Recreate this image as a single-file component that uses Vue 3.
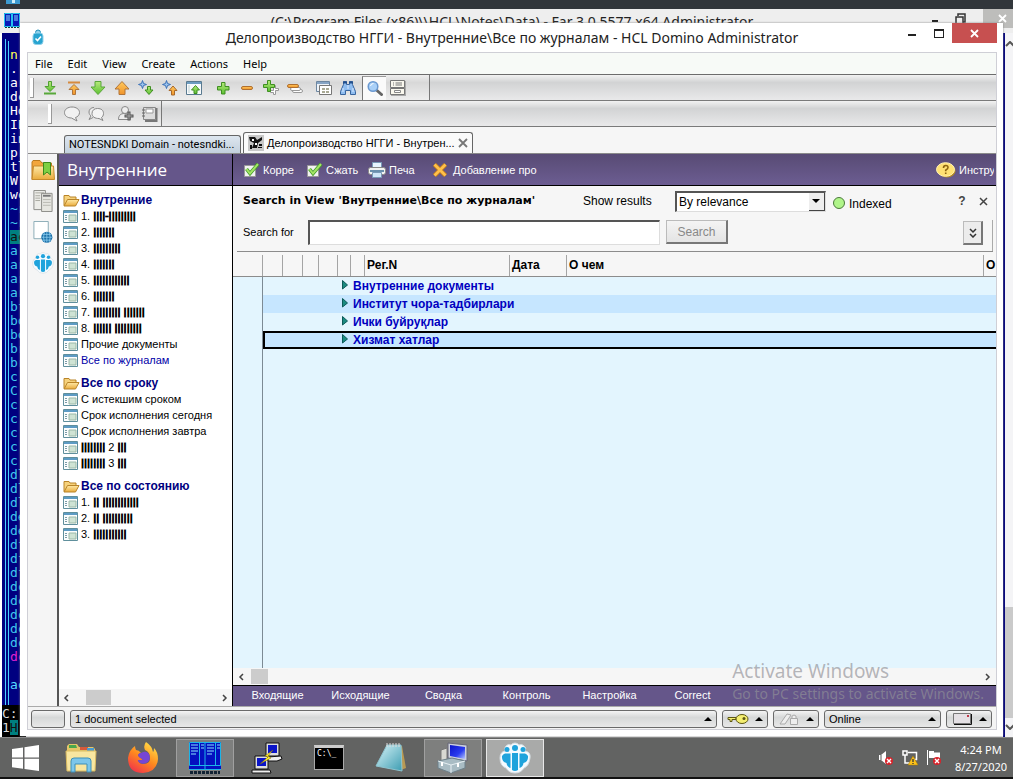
<script setup>
import { ref } from 'vue'

const consoleLines = [
  ['n', 'y'], ['.', 'w'], ['ar', 'w'], ['dc', 'w'], ['Ho', 'w'], ['IE', 'w'], ['in', 'w'], ['pr', 'w'], ['tl', 'w'],
  ['W', 'w'], ['wc', 'w'], ['~r', 'c'], ['~r', 'c'], ['ac', 'hl'], ['a', 'c'], ['ar', 'c'], ['ar', 'c'], ['ar', 'c'],
  ['bf', 'c'], ['bo', 'c'], ['bo', 'c'], ['br', 'c'], ['br', 'c'], ['c.', 'c'], ['C.', 'c'], ['c.', 'c'], ['c.', 'c'],
  ['c.', 'c'], ['c.', 'c'], ['c.', 'c'], ['dl', 'c'], ['dl', 'c'], ['dl', 'c'], ['de', 'c'], ['de', 'c'], ['df', 'c'],
  ['df', 'c'], ['df', 'c'], ['dc', 'c'], ['dc', 'c'], ['dc', 'c'], ['dc', 'c'], ['dc', 'c'], ['dc', 'm'],
]

const menus = ['File', 'Edit', 'View', 'Create', 'Actions', 'Help']

const tools = [
  [['down-bar', 'Last'], ['up-bar', 'First'], ['down', 'Next'], ['up', 'Previous'], ['next-unread', 'Next unread'], ['prev-unread', 'Previous unread'], ['parent', 'Open parent']],
  [['plus', 'Expand'], ['minus', 'Collapse'], ['plus-all', 'Expand all'], ['minus-all', 'Collapse all']],
  [['grid', 'Calendar'], ['binoculars', 'Find']],
]

const bars = (n) => '|'.repeat(n)
const groups = [
  {
    title: 'Внутренние',
    items: [
      ['1. ', bars(4) + '-' + bars(9)], ['2. ', bars(7)], ['3. ', bars(9)], ['4. ', bars(7)], ['5. ', bars(12)],
      ['6. ', bars(7)], ['7. ', bars(9), ' ', bars(7)], ['8. ', bars(6), ' ', bars(9)], ['Прочие документы'], ['Все по журналам'],
    ],
  },
  {
    title: 'Все по сроку',
    items: [['С истекшим сроком'], ['Срок исполнения сегодня'], ['Срок исполнения завтра'], ['', bars(8), ' 2 ', bars(3)], ['', bars(8), ' 3 ', bars(3)]],
  },
  {
    title: 'Все по состоянию',
    items: [['1. ', bars(2), ' ', bars(12)], ['2. ', bars(2), ' ', bars(10)], ['3. ', bars(11)]],
  },
]

const rows = ['Внутренние документы', 'Институт чора-тадбирлари', 'Ички буйруқлар', 'Хизмат хатлар']
const sections = ['Входящие', 'Исходящие', 'Сводка', 'Контроль', 'Настройка', 'Correct']
const apps = [
  ['explorer', 'File Explorer', ''], ['firefox', 'Firefox', ''], ['far', 'Far Manager', 'open'], ['putty', 'PuTTY', ''],
  ['cmd', 'Command Prompt', ''], ['notepad', 'Notepad', ''], ['server', 'Server', 'open'], ['domino', 'Domino Administrator', 'open current'],
]

const query = ref('')
const order = ref('By relevance')
const selected = ref(3)
</script>

<template>
  <svg class="defs" aria-hidden="true">
    <defs>
      <linearGradient id="g-green" x1="0" y1="0" x2="0" y2="1"><stop offset="0" stop-color="#b6ea7a" /><stop offset="1" stop-color="#5cc032" /></linearGradient>
      <linearGradient id="g-orange" x1="0" y1="0" x2="0" y2="1"><stop offset="0" stop-color="#ffc95c" /><stop offset="1" stop-color="#f0942c" /></linearGradient>
      <linearGradient id="g-folder" x1="0" y1="0" x2="0" y2="1"><stop offset="0" stop-color="#ffe9a6" /><stop offset="1" stop-color="#e9ab3c" /></linearGradient>
      <linearGradient id="g-fox" x1="0.8" y1="0" x2="0.2" y2="1"><stop offset="0" stop-color="#ffe14a" /><stop offset="0.5" stop-color="#ff8a1e" /><stop offset="1" stop-color="#f0304c" /></linearGradient>
      <linearGradient id="g-screen" x1="0" y1="0" x2="1" y2="1"><stop offset="0" stop-color="#0a12c8" /><stop offset="0.6" stop-color="#2a3cf0" /><stop offset="1" stop-color="#b8c8ff" /></linearGradient>
      <linearGradient id="g-note" x1="0" y1="0" x2="1" y2="1"><stop offset="0" stop-color="#d9f4f8" /><stop offset="1" stop-color="#3d9db2" /></linearGradient>

      <symbol id="down-bar" viewBox="0 0 16 16"><path d="M6.500 1.500h3v5h3.500L8 11.500 3 6.500h3.500z" fill="url(#g-green)" stroke="#4f9f32" /><path d="M2 13.500h12" stroke="#58a83a" stroke-width="2" /></symbol>
      <symbol id="up-bar" viewBox="0 0 16 16"><path d="M6.500 14.500h3v-5h3.500L8 4.500 3 9.500h3.500z" fill="url(#g-orange)" stroke="#b0753a" /><path d="M2 2.500h12" stroke="#d68a3e" stroke-width="2" /></symbol>
      <symbol id="down" viewBox="0 0 16 16"><path d="M5 1.500h6v5.500h4L8 14.500 1 7h4z" fill="url(#g-green)" stroke="#5ba63c" /></symbol>
      <symbol id="up" viewBox="0 0 16 16"><path d="M5 14.500h6V9h4L8 1.500 1 9h4z" fill="url(#g-orange)" stroke="#b0753a" /></symbol>
      <symbol id="next-unread" viewBox="0 0 16 16"><path d="M4.500 .5l1 3 3 1-3 1-1 3-1-3-3-1 3-1z" fill="#9cc4ee" stroke="#3c72b8" /><path d="M9.500 6.500h3v3.500h2.500l-4 4.500-4-4.500h2.500z" fill="url(#g-green)" stroke="#3f8f22" /></symbol>
      <symbol id="prev-unread" viewBox="0 0 16 16"><path d="M4.500 .5l1 3 3 1-3 1-1 3-1-3-3-1 3-1z" fill="#9cc4ee" stroke="#3c72b8" /><path d="M9.500 15h3v-4.500h2.500l-4-4.500-4 4.500h2.500z" fill="url(#g-orange)" stroke="#a8692a" /></symbol>
      <symbol id="parent" viewBox="0 0 16 16"><path d="M.5 1.500h15v13H.5z" fill="#f7fafc" stroke="#5a7a90" /><path d="M1 3h14" stroke="#6d9cc0" stroke-width="2" /><path d="M3 5.500v8" stroke="#8aa" stroke-dasharray="1 1" /><path d="M8 13.500h3v-3.500h2.500L9.500 5.500 5.500 10H8z" fill="url(#g-green)" stroke="#3f8f22" /></symbol>
      <symbol id="plus" viewBox="0 0 16 16"><path d="M6.500 2.500h3.500v4h4V10h-4v4H6.500v-4h-4V6.500h4z" fill="url(#g-green)" stroke="#3f8f22" /></symbol>
      <symbol id="minus" viewBox="0 0 16 16"><rect x="2.500" y="6.500" width="11" height="3" rx="1.500" fill="url(#g-orange)" stroke="#b06f2e" /></symbol>
      <symbol id="plus-all" viewBox="0 0 16 16"><path d="M10.500 5.500h2v3h3v2h-3v4h-2v-2h-3v-2h3z" fill="#fff" stroke="#999" /><path d="M4.500 .5h3v4h4v3h-4v4h-3v-4h-4v-3h4z" fill="url(#g-green)" stroke="#3f8f22" /></symbol>
      <symbol id="minus-all" viewBox="0 0 16 16"><rect x="5.500" y="9.500" width="10" height="3" rx="1.500" fill="#fff" stroke="#999" /><rect x="3.500" y="7.500" width="10" height="3" rx="1.500" fill="#fff" stroke="#999" /><rect x=".5" y="4.500" width="11" height="3" rx="1.500" fill="url(#g-orange)" stroke="#b06f2e" /></symbol>
      <symbol id="grid" viewBox="0 0 16 16"><path d="M.5 1.500h13v10H.5z" fill="#eef3f8" stroke="#6d86a0" /><path d="M1 3h12" stroke="#86a4c4" stroke-width="2" /><path d="M3.500 5.500h12v9h-12z" fill="#fff" stroke="#777" /><path d="M6 8h3v2H6zM10 8h3v2h-3zM6 11h3v2H6zM10 11h3v2h-3z" fill="#a9a994" /></symbol>
      <symbol id="binoculars" viewBox="0 0 16 16"><path d="M3.500 1.500h3v3h3v-3h3v3l3 7v3h-5v-4h-5v4h-5v-3l3-7z" fill="#8fbdf0" stroke="#3a669f" /><path d="M3 8v4M13 8v4M8 5v4" stroke="#dbeaff" /><path d="M3 2.500h4M9 2.500h4" stroke="#234f8c" stroke-width="2" /></symbol>
      <symbol id="magnifier" viewBox="0 0 16 16"><path d="M10 10.500l4.500 4" stroke="#666" stroke-width="3" stroke-linecap="round" /><circle cx="6" cy="6.500" r="4.800" fill="#a9d0f8" stroke="#6a98d0" stroke-width="1.500" /><path d="M3.500 6a3 3 0 0 1 3-2.500" stroke="#fff" fill="none" /></symbol>
      <symbol id="form" viewBox="0 0 16 16"><path d="M1 1h15v15H1z" fill="#aaa" /><path d="M.5.5h14v7H.5zM.5 8.500h14v6H.5z" fill="#faf8ee" stroke="#777" /><path d="M3 3h1M5.500 3H12M3 5h1M5.500 5H12" stroke="#777" /><path d="M4.500 10.500h6v2h-6z" fill="#fff" stroke="#888" /></symbol>
      <symbol id="chat" viewBox="0 0 16 16"><path d="M8 1c4 0 7.500 2.200 7.500 5.500 0 2.500-2 4.500-4 5L13 15 7.500 12C3.500 12 .5 9.800.5 6.500S4 1 8 1z" fill="#f1f1f1" stroke="#888" /></symbol>
      <symbol id="chats" viewBox="0 0 16 16"><path d="M6 1.500c-3 0-5 2-5 4.500 0 2 1 3 2 4l-2 3.500 4-2" fill="#eee" stroke="#888" /><path d="M9.500 2.500c4 0 6 2 6 5 0 2-1 3.500-2 4l1.500 3-4-2C7 12.500 4 11 4 7.500s2.500-5 5.500-5z" fill="#f4f4f4" stroke="#888" /></symbol>
      <symbol id="add-person" viewBox="0 0 16 16"><circle cx="7" cy="4" r="3.500" fill="#eee" stroke="#888" /><path d="M.5 13.500c0-4 2-6 6-6s6 2 6 6z" fill="#eee" stroke="#888" /><path d="M11 5.500v9M6.500 10h9" stroke="#555" stroke-width="3" /><path d="M11 6.500v7M7.500 10h7" stroke="#aaa" /></symbol>
      <symbol id="book" viewBox="0 0 16 16"><path d="M1.500 1.500h12v12h-12z" fill="#ddd" stroke="#888" /><path d="M4 3h7v4H4z" fill="#fff" stroke="#999" /><path d="M0 4h3M0 7h3M0 10h3" stroke="#666" /><path d="M14.500 2v13H3" fill="none" stroke="#777" stroke-width="2" /></symbol>

      <symbol id="view" viewBox="0 0 15 13"><path d="M.5.500h14v12H.5z" fill="#fbfdfd" stroke="#5f8f9c" /><path d="M1 2h13" stroke="#5d9bc4" stroke-width="2" /><path d="M2 5.500h2M2 7.500h2M2 9.500h2" stroke="#7a9aa6" /><path d="M6 5h7v6H6z" fill="#cfe3d4" stroke="#9ab8a8" /></symbol>
      <symbol id="folder" viewBox="0 0 16 13"><path d="M.5 11.500v-10h5l1 1.500h6v3" fill="#f6d27c" stroke="#b98428" /><path d="M.5 12L4 5.500h11.500L12 12z" fill="url(#g-folder)" stroke="#b98428" /></symbol>
      <symbol id="domino" viewBox="0 0 32 32"><path d="M7 4a4 4 0 0 1 5-1 5 5 0 0 1 8 0 4 4 0 0 1 5 1q3 2 1 5 6 1 5 7-1 8-6 10-3 5-9 5t-9-5Q1 24 1 16q0-6 5-7-1-3 1-5z" fill="#f5fbff" stroke="#d6dde2" /><g fill="#1fa3dc"><circle cx="16" cy="6" r="3" /><circle cx="8" cy="7.500" r="2.500" /><circle cx="24" cy="7.500" r="2.500" /><path d="M13 11h6v17q-3 2-6 0zM6 11.500h5.500V26Q8 25 7.500 21q-5-1-4.500-7 1-2 3-2.500zM26 11.500h-5.500V26q3.500-1 4-5 5-1 4.500-7-1-2-3-2.500z" /></g></symbol>
      <symbol id="check" viewBox="0 0 16 16"><path d="M.5 3.500h11v11H.5z" fill="#f2f2f2" stroke="#999" /><path d="M2.500 7l3.500 4.500L14 2" fill="none" stroke="#3f9a26" stroke-width="3.500" /><path d="M2.500 7l3.500 4.500L14 2" fill="none" stroke="#a4e566" stroke-width="2" /></symbol>
      <symbol id="print" viewBox="0 0 18 16"><path d="M4.500.5h9v6h-9z" fill="#e8f4ff" stroke="#7a9ab8" /><rect x=".5" y="5.500" width="17" height="7" rx="2" fill="#f2f2f2" stroke="#888" /><path d="M2 9h14" stroke="#6a8fae" stroke-width="2" /><path d="M4.500 10.500h9v5h-9z" fill="#cfe6fa" stroke="#7a9ab8" /></symbol>
      <symbol id="cross" viewBox="0 0 16 16"><path d="M2.500 2.500l11 11M13.500 2.500l-11 11" stroke="#c07b1c" stroke-width="4.500" /><path d="M2.500 2.500l11 11M13.500 2.500l-11 11" stroke="#ffc04a" stroke-width="2.800" /></symbol>
      <symbol id="help" viewBox="0 0 20 16"><ellipse cx="11" cy="9" rx="8.500" ry="6.500" fill="#b98e20" /><ellipse cx="9.500" cy="7.500" rx="9" ry="6.800" fill="#ffe173" stroke="#fff2b4" /><path d="M7.500 6q0-2.500 2.300-2.500T12 5.500q0 1.200-2.300 2.700v1M9.700 10.500V12" fill="none" stroke="#8c6410" stroke-width="1.600" /></symbol>
      <symbol id="panels" viewBox="0 0 16 16"><path d="M0 0h16v14H0z" fill="#0818b8" /><path d="M.5.5h7v13h-7zM8.500.5h7v13h-7z" fill="none" stroke="#23c3ee" /><path d="M2 3h4M2 5h4M2 7h4M10 3h4M10 5h4M10 7h4" stroke="#8adfff" /><path d="M1 14.500h14" stroke="#0a3b3b" stroke-dasharray="2 1" /></symbol>
      <symbol id="shield" viewBox="0 0 12 16"><circle cx="6" cy="3.500" r="2.500" fill="#8fd0ea" stroke="#2390b8" /><rect x="1" y="4" width="10" height="11.500" rx="3" fill="#28a4d0" stroke="#8fd0ea" /><path d="M3.500 9.500l2 2 3.500-4" fill="none" stroke="#fff" stroke-width="1.600" /></symbol>

      <symbol id="bookmarks" viewBox="0 0 24 22"><path d="M1 20.500V3l1-1.500h7L11 4h9.500v16.500z" fill="#f2a63c" stroke="#b97a1e" /><path d="M1 20.500L2.500 7h20l1 13.500z" fill="url(#g-folder)" stroke="#c68a2a" /><path d="M12.500 3.500h7V16L16 13l-3.500 3z" fill="#7ed043" stroke="#3d8a1e" /></symbol>
      <symbol id="pages" viewBox="0 0 20 23"><path d="M.5.5h12v20H.5z" fill="#ecece8" stroke="#8c8c86" /><path d="M2 3h9M2 6h5M2 8.500h5M2 11h5" stroke="#a8a8a0" /><path d="M8.500 3.500h11v19h-11z" fill="#e6e6e0" stroke="#8c8c86" /><path d="M10 6h8" stroke="#777" stroke-width="2" /><path d="M10 10h8M10 13h8M10 16h8" stroke="#b8b8b0" /></symbol>
      <symbol id="web" viewBox="0 0 20 23"><path d="M.5.5h15v18H.5z" fill="#fff" stroke="#88aab4" /><circle cx="14" cy="17" r="5.800" fill="#1b6fa8" /><path d="M8.500 17h11M9.500 14h9M9.500 20h9M14 11.500v11M11.500 12q-2 5 0 10M16.500 12q2 5 0 10" stroke="#8fd0f0" fill="none" stroke-width=".8" /></symbol>

      <symbol id="explorer" viewBox="0 0 32 32"><path d="M2 26V4l2-2h8l2 3h14l2 2v19z" fill="#e5c667" /><path d="M4 3h7l1 3H4z" fill="#49a84c" /><path d="M15 5h8v3h-8z" fill="#d65a3a" /><path d="M22 6h7v3h-7z" fill="#4a9ad0" /><path d="M1 9h30l-1 20H2z" fill="#f8e6a0" stroke="#d9bb62" /><path d="M9 16q-3 0-3 3v11h4v-8h12v8h4V19q0-3-3-3z" fill="#7cc6ea" stroke="#3d8fb8" /></symbol>
      <symbol id="firefox" viewBox="0 0 32 32"><path d="M19 0q-3 4-1 8 5 2 5 8 0 6-7 6-4 0-5-4 3 1 5-1-4-1-5-4 1-2 3-2-2-3-5-3Q8 6 8 4 2 8 1 16q0 15 15 15 14-1 15-14 0-7-4-11 0 3-1 4-1-6-7-10z" fill="url(#g-fox)" /><path d="M14 11q5-3 8 1 2 5-1 8-4 3-8 1-3-2-2-3 3 1 5-1-4-1-5-4 1-2 3-2z" fill="#7646d4" /></symbol>
      <symbol id="far" viewBox="0 0 32 32"><path d="M0 0h32v28H0z" fill="#0410c0" /><path d="M.5.5h31v23H.5zM10.500 0v24M16 0v28M26.500 0v24M0 27.500h32" fill="none" stroke="#1cb4e8" /><path d="M2 3h7M2 6h7M2 9h7M2 12h5M12 3h3M12 6h3M18 3h7M18 6h7M18 9h7M18 12h5M28 3h3M28 6h3" stroke="#8ae4ff" /><path d="M1 30.500h30" stroke="#123" stroke-width="3" stroke-dasharray="3 1" /></symbol>
      <symbol id="putty" viewBox="0 0 32 32"><path d="M15 1h13v13H15zM4 14h13v13H4z" fill="#ddd" stroke="#111" /><path d="M17 3h9v8h-9zM6 16h9v8H6z" fill="#0a14c8" /><path d="M17 15l13-1 1 3-5 2h-9zM1 28h18l1 3H1z" fill="#eee" stroke="#111" /><path d="M22 8l-8 6 3 1-8 7 11-6-3-2z" fill="#ffee2a" stroke="#806800" stroke-width=".5" /></symbol>
      <symbol id="notepad" viewBox="0 0 32 32"><path d="M25 4h2l4 22-5 2z" fill="#b99a54" /><path d="M12 3h14l1 26-26-5z" fill="url(#g-note)" stroke="#8ec4cf" /><path d="M12 1v4M15 1v4M18 1v4M21 1v4M24 1v4" stroke="#ddd" /></symbol>
      <symbol id="server" viewBox="0 0 32 32"><path d="M4 8l6-2v14l-6 1z" fill="#d8d8d2" stroke="#777" /><path d="M11 1l19 2v16l-19-3z" fill="#ccd0dd" stroke="#667" /><path d="M13 3l15 2v12l-15-3z" fill="url(#g-screen)" /><path d="M1 19l14-3 13 3v7l-14 5-13-5z" fill="#a9bcc4" stroke="#6d808a" /><path d="M1 19l13 4 14-4M14 23v8" fill="none" stroke="#e6eef2" /><path d="M5 20v4M21 21v4" stroke="#fff" stroke-width="2" /></symbol>

      <symbol id="bad" viewBox="0 0 8 8"><circle cx="4" cy="4" r="4" fill="#d8232a" /><path d="M2 2l4 4M6 2L2 6" stroke="#fff" stroke-width="1.400" /></symbol>
    </defs>
  </svg>

  <div class="desktop">
    <div class="top-strip"><svg class="strip-icon" viewBox="0 0 14 4"><path d="M0 0h14v4H0z" fill="#3d9ad0" /><path d="M3 0h3v3h3V0" fill="#cfeefa" /></svg></div>

    <div class="workspace">
      <section class="far-window">
        <header class="far-title">
          <svg class="far-icon"><use href="#panels" /></svg>
          <span class="far-name">(C:\Program Files (x86)\\HCL\Notes\Data) - Far 3.0.5577 x64 Administrator</span>
          <span class="far-controls"><i class="dash"></i><svg class="restore" viewBox="0 0 11 12"><path d="M3 3V1h7v8H8M1 4h7v7H1z" fill="none" stroke="#333" stroke-width="1.500" /></svg><b><svg viewBox="0 0 9 9"><path d="M1 1l7 7M8 1L1 8" stroke="#fff" stroke-width="1.800" /></svg></b></span>
        </header>
        <div class="far-body">
          <div class="console">
            <div class="panel">
              <p v-for="(l, i) in consoleLines" :key="i" :class="l[1]">{{ l[0] }}</p>
              <p class="w current-file">ac</p>
            </div>
            <div class="prompt"><p>C:</p><p>1<span>H</span></p></div>
          </div>
          <div class="far-scroll">
            <svg viewBox="0 0 8 6"><path d="M1 5l4-4 4 4" /></svg><i></i><svg viewBox="0 0 8 6"><path d="M1 1l4 4 4-4" /></svg>
          </div>
        </div>
      </section>

      <main class="window">
        <header class="title-bar">
          <svg class="title-icon"><use href="#shield" /></svg>
          <h1>Делопроизводство НГГИ - Внутренние\Все по журналам - HCL Domino Administrator</h1>
          <div class="win-controls">
            <button aria-label="Minimize"><i class="dash"></i></button>
            <button aria-label="Maximize"><i class="box"></i></button>
            <button class="close" aria-label="Close"><svg viewBox="0 0 9 9"><path d="M1 1l7 7M8 1L1 8" stroke="#fff" stroke-width="1.800" /></svg></button>
          </div>
        </header>

        <div class="client">
          <nav class="menu"><button v-for="m in menus" :key="m">{{ m }}</button></nav>

          <div class="tool-row">
            <div class="tool-set">
              <i class="grip"></i>
              <div v-for="(set, i) in tools" :key="i" class="tool-group">
                <button v-for="t in set" :key="t[0]" :aria-label="t[1]"><svg><use :href="'#' + t[0]" /></svg></button>
              </div>
              <button class="pressed" aria-label="Search"><svg><use href="#magnifier" /></svg></button>
              <button aria-label="Form"><svg><use href="#form" /></svg></button>
            </div>
          </div>
          <div class="tool-row">
            <div class="tool-set second">
              <i class="grip"></i>
              <div class="tool-group"><button aria-label="Chat"><svg><use href="#chat" /></svg></button><button aria-label="Group chat"><svg><use href="#chats" /></svg></button></div>
              <div class="tool-group"><button aria-label="Add contact"><svg><use href="#add-person" /></svg></button><button aria-label="Address book"><svg><use href="#book" /></svg></button></div>
            </div>
          </div>

          <div class="tabs">
            <button class="tab">NOTESNDKI Domain - notesndki...</button>
            <button class="tab active">
              <svg class="tab-icon" viewBox="0 0 16 16"><path d="M0 0h16v16H0z" fill="#c8c8c8" /><path d="M1 2h6l2 3 5-3v3l-4 3-1 5H4l2-5-4-2zM11 9h3v2h-3zM10 12h4v1h-4zM2 10h2v4H2z" fill="#111" /><path d="M4 4h2v2H4zM7 8h2v2H7z" fill="#fff" /></svg>
              <span>Делопроизводство НГГИ - Внутрен...</span>
              <svg class="tab-close" viewBox="0 0 10 10"><path d="M1 1l8 8M9 1L1 9" stroke="#777" stroke-width="1.800" /></svg>
            </button>
          </div>

          <div class="body">
            <aside class="rail">
              <button aria-label="Bookmarks"><svg class="wide"><use href="#bookmarks" /></svg></button>
              <button aria-label="Pages"><svg><use href="#pages" /></svg></button>
              <button aria-label="Web"><svg><use href="#web" /></svg></button>
              <button aria-label="Domino"><svg class="wide"><use href="#domino" /></svg></button>
            </aside>

            <aside class="sidebar">
              <h2>Внутренние</h2>
              <div class="tree">
                <section v-for="g in groups" :key="g.title">
                  <h3><svg><use href="#folder" /></svg>{{ g.title }}</h3>
                  <a v-for="(it, i) in g.items" :key="i" href="#" :class="{ chosen: it[0] === 'Все по журналам' }">
                    <svg><use href="#view" /></svg><span v-for="(part, k) in it" :key="k" :class="{ bars: k % 2 }">{{ part }}</span>
                  </a>
                </section>
              </div>
              <div class="hscroll"><svg viewBox="0 0 6 8"><path d="M5 1L2 4l3 3" /></svg><i class="thumb side"></i><svg viewBox="0 0 6 8"><path d="M1 1l3 3-3 3" /></svg></div>
            </aside>

            <section class="content">
              <div class="actions">
                <button class="a1"><svg><use href="#check" /></svg><span>Корре</span></button>
                <button class="a2"><svg><use href="#check" /></svg><span>Сжать</span></button>
                <button class="a3"><svg class="w18"><use href="#print" /></svg><span>Печа</span></button>
                <button class="a4"><svg><use href="#cross" /></svg><span>Добавление про</span></button>
                <button class="a5"><svg class="w20"><use href="#help" /></svg><span>Инстру</span></button>
              </div>

              <form class="search" @submit.prevent>
                <div class="search-line">
                  <strong>Search in View 'Внутренние\Все по журналам'</strong>
                  <label for="order">Show results</label>
                  <div class="select">
                    <select id="order" v-model="order"><option>By relevance</option><option>By date</option></select>
                    <i><svg viewBox="0 0 8 4"><path d="M0 0h8L4 4z" /></svg></i>
                  </div>
                  <i class="dot"></i><span class="indexed">Indexed</span>
                  <button type="button" class="mini q">?</button>
                  <button type="button" class="mini" aria-label="Close search"><svg viewBox="0 0 9 9"><path d="M1 1l7 7M8 1L1 8" stroke="#444" stroke-width="1.500" /></svg></button>
                </div>
                <div class="search-line second">
                  <label for="query">Search for</label>
                  <input id="query" v-model="query" type="text" />
                  <button class="go" disabled>Search</button>
                  <div class="more"><button type="button" aria-label="More options"><svg viewBox="0 0 8 10"><path d="M1 1l3 3 3-3M1 6l3 3 3-3" fill="none" stroke="#333" stroke-width="1.500" /></svg></button></div>
                </div>
              </form>

              <div class="grid">
                <table>
                  <colgroup><col class="c30" /><col class="c20" /><col class="c20" /><col class="c16" /><col class="c19" /><col class="c13" /><col class="c14" /><col class="c145" /><col class="c57" /><col /><col class="c12" /></colgroup>
                  <thead><tr><th v-for="n in 7" :key="n"></th><th>Рег.N</th><th>Дата</th><th>О чем</th><th>О</th></tr></thead>
                  <tbody>
                    <tr v-for="(r, i) in rows" :key="r" :class="{ selected: selected === i }" @click="selected = i">
                      <td></td><td colspan="10"><svg viewBox="0 0 6 10"><path d="M.5.5v8.500L5.500 5z" fill="#1a8a80" stroke="#0c5a58" /></svg>{{ r }}</td>
                    </tr>
                  </tbody>
                </table>
              </div>
              <div class="hscroll main"><svg viewBox="0 0 6 8"><path d="M5 1L2 4l3 3" /></svg><i class="thumb"></i><svg viewBox="0 0 6 8"><path d="M1 1l3 3-3 3" /></svg></div>
              <nav class="sections"><button v-for="s in sections" :key="s">{{ s }}</button></nav>
            </section>
          </div>

          <footer class="status">
            <button class="s34" aria-label="Network activity"></button>
            <button class="grow"><span>1 document selected</span><i class="tri"></i></button>
            <button class="s46" aria-label="Security"><svg viewBox="0 0 22 12"><path d="M9 4.500H1v2h2v2h2v-2h4z" fill="#f4ee70" stroke="#5d5714" /><ellipse cx="15" cy="6" rx="6" ry="4.500" fill="#f4ee70" stroke="#5d5714" /><circle cx="17" cy="5.500" r="1.500" fill="#5d5714" /></svg><i class="tri"></i></button>
            <button class="s46" aria-label="Encryption"><svg viewBox="0 0 22 12"><path d="M2 11L9 1l4 1-6 9z" fill="#eee" stroke="#aaa" /><path d="M12.500 5.500h7v6h-7zM14 5V3q2-2 4 0v2" fill="#eee" stroke="#aaa" /></svg><i class="tri"></i></button>
            <button class="s117"><span>Online</span><i class="tri"></i></button>
            <button class="s46" aria-label="Mail"><svg viewBox="0 0 22 12"><path d="M2.500.500h17v10h-17z" fill="#e4e0e4" stroke="#777" /><path d="M3 11.500h17.500V1" fill="none" stroke="#111" /><path d="M16 2h2v2h-2z" fill="#c03a4a" /></svg><i class="tri"></i></button>
          </footer>
        </div>
      </main>

      <div class="watermark"><p class="big">Activate Windows</p><p>Go to PC settings to activate Windows.</p></div>
    </div>

    <nav class="taskbar">
      <button class="start" aria-label="Start"><svg viewBox="0 0 27 26"><path d="M0 4l11-1.600V12.500H0zM12.500 2.200L27 0v12.500H12.500zM0 13.700h11v10L0 22.200zM12.500 13.700H27V26l-14.500-2z" fill="#fff" /></svg></button>
      <button v-for="a in apps" :key="a[0]" :class="a[2]" :aria-label="a[1]">
        <span v-if="a[0] === 'cmd'" class="cmd">C:\_</span>
        <svg v-else><use :href="'#' + a[0]" /></svg>
      </button>
      <div class="tray">
        <svg viewBox="0 0 16 16"><path d="M1 5h2l5-4v13L3 10H1z" fill="#fff" /><path d="M3 5v5" stroke="#555" /><use href="#bad" x="7" y="7" width="8" height="8" /></svg>
        <svg viewBox="0 0 16 16"><path d="M1 1h4v4H1zM3 5v8h5M6 2.500h8.500v7H10" fill="none" stroke="#fff" stroke-width="1.500" /><path d="M11 6l5 9H6z" fill="#fcc21a" stroke="#a87a00" stroke-width=".5" /><path d="M11 9v3M11 13v1" stroke="#333" stroke-width="1.300" /></svg>
        <svg viewBox="0 0 16 16"><path d="M1.500 0v15" stroke="#fff" /><path d="M3 1h5v1.500h6V9H8V8H3z" fill="#fff" /><use href="#bad" x="7" y="7" width="8" height="8" /></svg>
      </div>
      <time class="clock"><span>4:24 PM</span><span>8/27/2020</span></time>
    </nav>
  </div>
</template>

<style>
html, body { margin: 0; height: 100%; }
</style>

<style scoped>
* { box-sizing: border-box; }
p, h1, h2, h3 { margin: 0; font-weight: 400; }
button { margin: 0; padding: 0; border: 0; background: none; font: inherit; color: inherit; white-space: nowrap; }
svg { display: block; flex: none; }
.defs { position: absolute; width: 0; height: 0; }
.desktop { display: flex; flex-direction: column; height: 100vh; overflow: hidden; background: #31363b; font: 11px/14px "Liberation Sans", Arial, sans-serif; color: #000; }
.top-strip { flex: none; height: 9px; padding-left: 6px; background: #31363b; }
.strip-icon { width: 14px; height: 4px; }
.workspace { position: relative; flex: 1; min-height: 0; }

.far-window { display: flex; flex-direction: column; height: 100%; background: #f4f4f4; }
.far-title { display: flex; height: 24px; flex: none; padding-left: 4px; background: #eeeeee; }
.far-icon { width: 16px; height: 16px; margin-top: 4px; }
.far-name { flex: 1; padding-left: 72px; padding-top: 3px; text-align: center; font: 14px/20px "Noto Sans", sans-serif; color: #222; white-space: nowrap; }
.far-controls { display: flex; width: 81px; gap: 17px; }
.far-controls b { display: flex; align-items: center; justify-content: center; width: 37px; height: 19px; padding-left: 8px; background: #bdbdbb; }
.far-controls b svg { width: 9px; height: 9px; }
.dash { width: 8px; height: 2px; background: #222; }
.far-controls .dash { margin-top: 11px; }
.far-controls .restore { width: 11px; height: 12px; margin-top: 4px; }
.far-body { display: flex; flex: 1; min-height: 0; }
.console { display: flex; flex: 1; flex-direction: column; padding-left: 2px; background: #fff; border-right: 2px solid #00007c; }
.panel { flex: 1; width: 24px; min-height: 0; padding: 15px 0 0 8px; overflow: hidden; background: linear-gradient(#4ad0ff 0 0) 3px 6px / 1px 100% no-repeat, linear-gradient(#4ad0ff 0 0) 6px 8px / 1px 100% no-repeat, #000080; }
.panel p, .prompt p { height: 14px; font: 13px/14px "DejaVu Sans Mono", monospace; white-space: pre; }
.y { color: #ffff55; } .w { color: #fff; } .c { color: #40c8ec; } .m { color: #e020d0; } .hl { background: #008080; color: #111; }
.panel .current-file { margin-top: 14px; color: #55d8ff; }
.prompt { height: 32px; padding-top: 2px; width: 24px; background: #000; color: #ddd; overflow: hidden; }
.prompt span { background: #008080; color: #111; }
.far-scroll { display: flex; flex-direction: column; align-items: center; width: 8px; padding: 8px 0 7px; overflow: hidden; background: #f4f4f6; }
.far-scroll svg { width: 8px; height: 6px; fill: none; stroke: #555; stroke-width: 2; }
.far-scroll i { width: 8px; height: 111px; margin: auto 0 6px; background: #cacaca; }

.window { position: absolute; top: 14px; right: 10px; bottom: 1px; left: 20px; display: flex; flex-direction: column; padding: 0 6px 6px 7px; background: #fff; box-shadow: 0 0 2px #888; }
.title-bar { position: relative; display: flex; align-items: center; justify-content: center; height: 29px; flex: none; }
.title-icon { position: absolute; left: 5px; top: 6px; width: 12px; height: 16px; }
h1 { font: 14px/20px "Noto Sans", sans-serif; color: #222; white-space: nowrap; }
.win-controls { position: absolute; right: 0; top: 0; display: flex; }
.win-controls button { display: flex; align-items: center; justify-content: center; width: 27px; height: 20px; }
.win-controls .dash { margin-top: 4px; }
.box { width: 10px; height: 9px; border: 1px solid #222; border-top-width: 2px; }
.win-controls .close { width: 45px; background: #c75050; }
.close svg { width: 9px; height: 9px; }

.client { display: flex; flex: 1; min-height: 0; flex-direction: column; border: 1px solid #cfcfd6; background: #f5f5f5; }
.menu { display: flex; flex: none; gap: 15px; height: 22px; padding-left: 7px; background: #f7faf7; border-bottom: 1px solid #6c6c6c; font: 11px/20px "Noto Sans", sans-serif; }
.tool-row { height: 26px; flex: none; border-bottom: 1px solid #7a7a7a; background: linear-gradient(#f2f2f2, #d2d3d4 30%, #e9e9ea); }
.tool-set { display: flex; align-items: center; gap: 0; width: 402px; height: 25px; padding-left: 2px; border-right: 1px solid #777; background: linear-gradient(#eeeeee, #d8d8d8 30%, #eeeeee); }
.tool-set.second { width: 134px; padding-left: 20px; }
.grip { width: 4px; height: 20px; margin-right: 4px; background: #fff; border-right: 1px solid #999; border-bottom: 1px solid #999; }
.tool-group { display: flex; margin-right: 5px; }
.tool-group:nth-last-child(3) { margin-right: 2px; }
.tool-set button { display: flex; align-items: center; justify-content: center; width: 24px; height: 24px; }
.tool-set svg { width: 16px; height: 16px; }
.tool-set .pressed { background: #fafafa; border-left: 1px solid #777; border-top: 1px solid #999; }
.second .grip { flex: none; margin-right: 8px; }
.second .tool-group { margin-right: 6px; }
.second .tool-group:last-child { margin-right: 0; }

.tabs { display: flex; flex: none; align-items: flex-end; gap: 2px; height: 27px; padding-left: 36px; border-bottom: 1px solid #8a8a8a; background: #f6f6f6; }
.tab { width: 177px; height: 18px; padding: 0 4px; border: 1px solid #666; border-bottom: 0; border-radius: 3px 3px 0 0; background: linear-gradient(#dde6ef, #c3d0dd); text-align: left; overflow: hidden; font: 11px/14px Roboto, sans-serif; }
.tab.active { display: flex; align-items: center; width: 230px; height: 21px; background: #fafafa; font: 11px/14px "Liberation Sans", sans-serif; }
.tab-icon { width: 16px; height: 16px; margin-right: 3px; }
.tab span { flex: 1; }
.tab-close { width: 10px; height: 10px; }

.body { display: flex; flex: 1; min-height: 0; border-bottom: 1px solid #aaa; }
.rail { display: flex; flex-direction: column; width: 29px; align-items: center; padding-top: 4px; }
.rail button { display: flex; align-items: center; justify-content: center; width: 24px; height: 23px; margin-bottom: 8px; }
.rail svg { width: 20px; height: 22px; }
.rail .wide { width: 24px; }

.sidebar { display: flex; flex-direction: column; width: 176px; border-left: 2px solid #555; border-right: 1px solid #000; background: #fff; }
h2 { flex: none; height: 32px; padding-left: 8px; background: #65568a; border-bottom: 1px solid #000; color: #fff; font: 17px/32px "Open Sans", sans-serif; }
.tree { flex: 1; min-height: 0; padding: 6px 0 0 4px; overflow: hidden; }
.tree section { margin-bottom: 7px; }
h3 { display: flex; align-items: center; height: 16px; font-weight: 700; font-size: 12px; color: #000080; }
.tree h3 svg { width: 17px; height: 13px; margin-right: 1px; }
.tree a { display: flex; align-items: center; height: 16px; color: #000; text-decoration: none; white-space: pre; }
.tree a svg { width: 15px; height: 13px; margin-right: 3px; }
.tree .chosen { color: #0000a8; }
.bars { font: 9px/16px "DejaVu Sans", sans-serif; -webkit-text-stroke: 1px #000; }
.hscroll { display: flex; flex: none; align-items: center; height: 17px; padding: 0 4px; background: #f6f6f6; }
.hscroll svg { width: 6px; height: 8px; }
.hscroll path { fill: none; stroke: #444; stroke-width: 1.500; }
.thumb { width: 17px; height: 15px; margin: 0 auto 0 7px; background: #cccccc; }
.thumb.side { width: 25px; margin-left: 17px; }

.content { display: flex; flex: 1; min-width: 0; flex-direction: column; }
.actions { display: flex; flex: none; align-items: center; height: 32px; padding: 0 2px 0 11px; border-bottom: 1px solid #000; background: linear-gradient(#584b74, #6c5d92); color: #fff; }
.actions button { display: flex; align-items: center; gap: 3px; overflow: hidden; }
.actions svg { width: 16px; height: 16px; }
.actions .w18 { width: 18px; }
.actions .w20 { width: 20px; }
.a1 { width: 63px; }
.a2 { width: 61px; }
.a3 { width: 48px; margin-right: 16px; }
.actions .a4 { gap: 5px; }
.a5 { width: 58px; margin-left: auto; }

.search { flex: none; height: 66px; padding: 0 3px 0 4px; background: #f6f6f6; }
.search-line { display: flex; align-items: center; height: 30px; padding-left: 6px; font-size: 12px; }
.search-line strong { width: 340px; font: 700 11px/14px "DejaVu Sans", sans-serif; white-space: nowrap; }
.search-line label { width: 92px; }
.select { position: relative; width: 151px; height: 21px; }
.select select { width: 100%; height: 100%; padding: 1px 2px 0; appearance: none; border: 1px solid #ddd; border-top: 2px solid #555; border-left: 2px solid #555; border-radius: 0; background: #fff; font: inherit; color: #000; }
.select i { position: absolute; top: 2px; right: 1px; width: 16px; height: 18px; padding: 6px 3px; border-right: 1px solid #444; border-bottom: 1px solid #444; background: #eee; pointer-events: none; }
.select svg { width: 8px; height: 4px; }
.dot { width: 12px; height: 12px; margin: 4px 4px 0 7px; border: 1px solid #4a7a3a; border-radius: 6px; background: #b0f58a; }
.indexed { margin-top: 6px; }
.mini { width: 12px; height: 12px; margin-right: 5px; }
.mini svg { width: 9px; height: 9px; margin-left: 3px; }
.mini.q { margin-left: auto; margin-right: 8px; font: 700 12px/12px "Liberation Sans", sans-serif; color: #444; }
.search-line.second { height: 36px; align-items: flex-start; padding-top: 4px; border-bottom: 1px solid #8c8c8c; }
.second label { width: 65px; padding-top: 5px; font-size: 11px; }
.second input { flex: 1 1 352px; max-width: 352px; height: 25px; padding: 0 4px; border: 1px solid #ddd; border-top: 2px solid #555; border-left: 2px solid #555; background: #fff; }
.go { width: 62px; height: 24px; margin-left: 6px; border: 1px solid #bbb; border-right: 2px solid #777; border-bottom: 2px solid #777; background: linear-gradient(#f4f4f4, #e4e4e4); }
.search-line .go { color: #888; font-size: 12px; }
.more { margin-left: auto; height: 31px; padding-right: 9px; border-right: 1px solid #aaa; }
.more button { display: flex; align-items: center; justify-content: center; width: 20px; height: 24px; margin-top: 1px; border: 1px solid #bbb; border-right: 2px solid #777; border-bottom: 2px solid #777; background: #ececec; }
.more svg { width: 8px; height: 10px; }

.grid { flex: 1; min-height: 0; overflow: hidden; background: linear-gradient(#7c8a94 0 0) 29px 0 / 1px 100% no-repeat, #e3f5fe; }
table { width: 100%; table-layout: fixed; border-collapse: separate; border-spacing: 0; }
.c30 { width: 30px; } .c20 { width: 20px; } .c16 { width: 16px; } .c19 { width: 19px; } .c13 { width: 13px; } .c14 { width: 14px; } .c145 { width: 145px; } .c57 { width: 57px; } .c12 { width: 12px; }
th { height: 25px; padding: 2px 0 0 2px; border-bottom: 1px solid #8c8c8c; background: linear-gradient(#a4a4a4 0 0) right 3px / 1px 21px no-repeat, #f6f6f6; text-align: left; font: 700 12px/22px "Liberation Sans", sans-serif; white-space: nowrap; }
th:last-child { background: #f6f6f6; }
td { height: 18px; padding: 0; font-weight: 700; font-size: 12px; line-height: 14px; color: #0000c0; }
td + td { padding-left: 79px; }
td svg { display: inline-block; width: 6px; height: 10px; margin-right: 5px; }
tbody tr:nth-child(2n) td + td { background: #c6e6ff; }
.selected td + td { border: 2px solid #000; border-right: 0; padding-left: 77px; }
.hscroll.main { padding-left: 5px; padding-right: 5px; }
.sections { display: flex; flex: none; height: 21px; padding-left: 3px; border-top: 1px solid #000; background: #65568a; color: #fff; }
.sections button { width: 83px; line-height: 18px; height: 18px; }

.status { display: flex; flex: none; align-items: center; gap: 5px; height: 22px; padding: 2px 4px 0 3px; background: #f4f4f4; }
.status button { display: flex; align-items: center; height: 18px; padding: 0 4px; border: 1px solid #6a6a6a; border-radius: 3px; background: linear-gradient(#f4f4f4, #d6d8d8 40%, #e8e8e8); }
.s34 { width: 34px; } .s46 { width: 46px; } .s117 { width: 117px; } .grow { flex: 1; }
.status svg { width: 22px; height: 12px; }
.tri { margin-left: auto; border: 4px solid transparent; border-top: 0; border-bottom: 4px solid #000; }

.watermark { position: absolute; right: 29px; bottom: 32px; color: rgba(146, 146, 152, .66); font: 14px/22px "Noto Sans", sans-serif; pointer-events: none; }
.watermark p { white-space: nowrap; }
.watermark .big { font-size: 19px; line-height: 24px; }

.taskbar { display: flex; flex: none; align-items: center; gap: 4px; height: 42px; border-top: 1px solid #888; border-bottom: 2px solid #111; background: #626362; }
.taskbar button { display: flex; align-items: center; justify-content: center; width: 58px; height: 38px; }
.taskbar .start { width: 48px; padding-left: 2px; }
.taskbar .start svg { width: 27px; height: 26px; }
.taskbar svg { width: 32px; height: 32px; }
.taskbar .open { border: 1px solid #a0a0a0; background: #7e7f7e; }
.taskbar .current { border-color: #e8e8e8; background: #a9aaa9; }
.cmd { width: 30px; height: 25px; border: 1px solid #aaa; border-top: 3px solid #ccc; background: #000; color: #fff; font: 8px/12px "DejaVu Sans Mono", monospace; text-align: left; padding-left: 2px; }
.taskbar .tray { display: flex; gap: 8px; margin-left: auto; padding-right: 4px; }
.taskbar .tray svg { width: 16px; height: 16px; }
.clock { display: flex; flex-direction: column; width: 62px; margin-right: 1px; text-align: center; color: #fff; font: 11px/17px "Noto Sans", sans-serif; }
</style>
